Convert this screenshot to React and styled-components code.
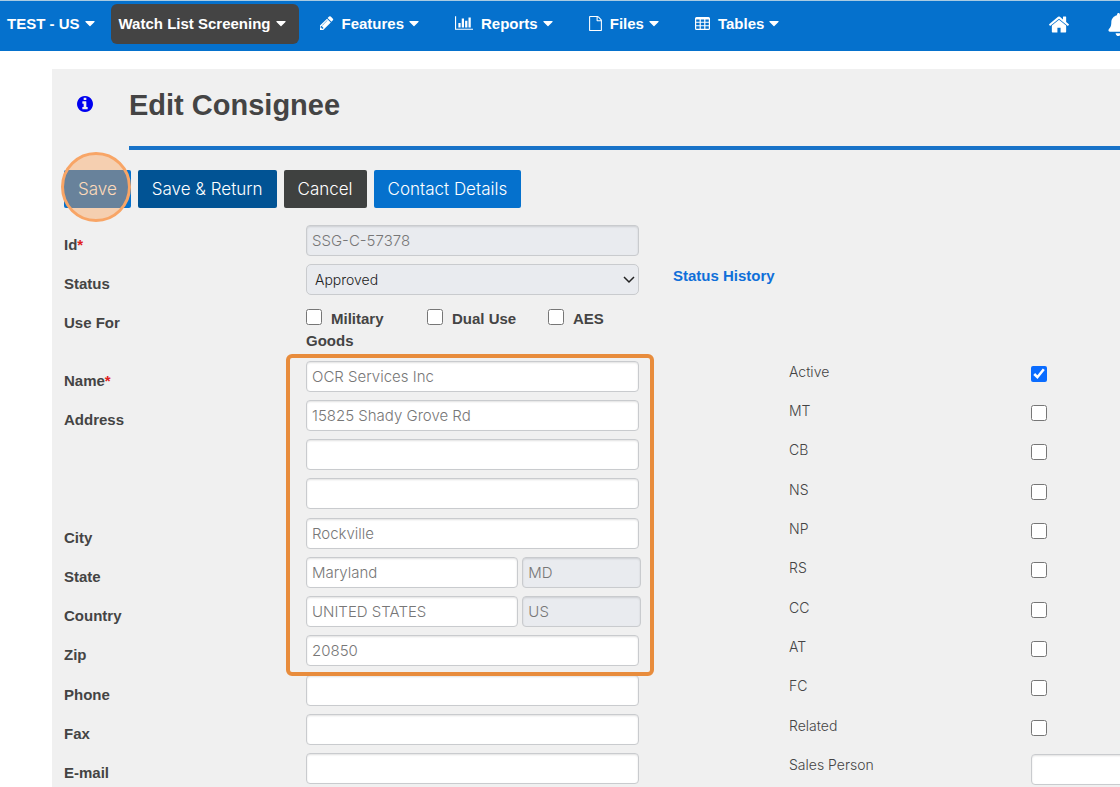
import React from 'react'
import styled, { createGlobalStyle, css } from 'styled-components'
import { FaBell, FaCaretDown } from 'react-icons/fa'

const colors = {
  blue: '#0571cd',
  darkBlue: '#015394',
  dark: '#3f4140',
  text: '#444',
  panel: '#f0f0f0',
  readOnly: '#e9ebef',
  border: '#c9cbce',
  highlight: '#e88c3c',
}

const GlobalStyle = createGlobalStyle`
  * {
    box-sizing: border-box;
  }

  body {
    margin: 0;
    background: #fff;
    color: ${colors.text};
    font-family: 'Liberation Sans', Arial, sans-serif;
    font-size: 15px;
  }
`

const lightText = css`
  font-family: Inter, 'Liberation Sans', sans-serif;
  font-weight: 300;
`

const Page = styled.div`
  display: flex;
  flex-direction: column;
  min-height: 100vh;
  overflow: hidden;
`

/* navigation */

const NavBar = styled.nav`
  display: flex;
  align-items: center;
  justify-content: space-between;
  padding: 3px 0 7px;
  border-top: 1px solid #a9cbe2;
  background: ${colors.blue};
`

const NavGroup = styled.div`
  display: flex;
  align-items: center;
`

const NavItem = styled.button`
  display: flex;
  align-items: center;
  gap: 8px;
  height: 40px;
  padding: 0 18px 2px;
  border: 0;
  border-radius: 6px;
  background: none;
  color: #fff;
  font: bold 15px 'Liberation Sans', Arial, sans-serif;
  white-space: nowrap;
`

const AccountItem = styled(NavItem)`
  padding: 0 16px 2px 7px;
`

const ActiveItem = styled(NavItem)`
  margin-right: 3px;
  padding: 0 13px 2px 8px;
  background: #444;
`

const Caret = styled(FaCaretDown)`
  width: 10px;
  height: 16px;
  margin-left: -3px;
`

const NavActions = styled.div`
  display: flex;
  align-items: center;
  gap: 38px;
  margin-right: -10px;
`

const IconLink = styled.a`
  display: flex;
  color: #fff;
`

/* panel */

const Panel = styled.main`
  flex: 1;
  margin: 18px 0 0 52px;
  padding: 0 0 3px 12px;
  background: ${colors.panel};
`

const Header = styled.header`
  display: flex;
`

const HelpLink = styled.a`
  flex: none;
  width: 65px;
  padding: 27px 0 0 13px;
  color: #0000f0;
`

const Title = styled.h1`
  flex: 1;
  margin: 0;
  padding: 18px 0 23px;
  border-bottom: 4px solid #1873c8;
  font-size: 29px;
  line-height: 36px;
`

const Toolbar = styled.div`
  display: flex;
  gap: 7px;
  margin: 20px 0 17px;
`

const SaveSpot = styled.div`
  position: relative;
`

const Button = styled.button`
  ${lightText}
  height: 38px;
  padding: 0 14px;
  border: 0;
  border-radius: 2px;
  background: ${props => props.$bg};
  color: #fff;
  font-size: 17px;
  white-space: nowrap;
`

const ClickMarker = styled.span`
  position: absolute;
  top: -18px;
  left: -3px;
  width: 70px;
  height: 70px;
  border: 3px solid #f8a566;
  border-radius: 50%;
  background: rgba(252, 157, 80, 0.4);
  pointer-events: none;
`

/* form */

const Columns = styled.div`
  display: grid;
  grid-template-columns: minmax(0, 725fr) minmax(0, 331fr);
`

const Group = styled.div`
  margin-bottom: 1px;
`

const Row = styled.div`
  display: grid;
  grid-template-columns: minmax(0, 242fr) minmax(0, 333fr) minmax(0, 150fr);
  align-items: start;
  min-height: 39px;
`

const Label = styled.label`
  padding-top: 11px;
  font-weight: bold;
  line-height: 18px;
`

const Required = styled.span`
  color: #e02020;
`

const Input = styled.input`
  ${lightText}
  width: 100%;
  min-width: 0;
  height: 31px;
  padding: 0 5px;
  border: 1px solid ${colors.border};
  border-radius: 4px;
  outline: 0;
  background: ${props => (props.readOnly ? colors.readOnly : '#fff')};
  box-shadow: inset 0 1px 2px rgba(0, 0, 0, 0.12);
  color: #777;
  font-size: 15px;
`

const SplitField = styled.div`
  display: grid;
  grid-template-columns: 213fr 119fr;
  gap: 4px;
  margin-right: -2px;
`

const SelectWrap = styled.div`
  position: relative;
`

const Select = styled.select`
  ${lightText}
  width: 100%;
  height: 31px;
  padding: 0 8px;
  border: 1px solid ${colors.border};
  border-radius: 5px;
  appearance: none;
  background: ${colors.readOnly};
  color: #222;
  font-size: 14px;
`

const Chevron = styled.svg`
  position: absolute;
  top: 12px;
  right: 4px;
  pointer-events: none;
`

const HistoryLink = styled.a`
  padding: 3px 0 0 34px;
  color: #0f6fd9;
  font-weight: bold;
  line-height: 18px;
  text-decoration: none;
  white-space: nowrap;
`

const UseFor = styled.div`
  display: grid;
  grid-template-columns: 121fr 121fr 91fr;
  height: 57px;
  padding-top: 5px;
`

const UseOption = styled.label`
  font-weight: bold;
  line-height: 22px;
`

const Checkbox = styled.input.attrs({ type: 'checkbox' })`
  width: 16px;
  height: 16px;
  margin: 0;
  accent-color: #0a6cff;
`

const UseCheckbox = styled(Checkbox)`
  margin-right: 9px;
  vertical-align: -1px;
`

const AddressBlock = styled.div`
  position: relative;
`

const Highlight = styled.div`
  position: absolute;
  top: -7px;
  bottom: -2px;
  left: calc(100% * 242 / 725 - 20px);
  width: calc(100% * 333 / 725 + 35px);
  border: 4px solid ${colors.highlight};
  border-radius: 6px;
  pointer-events: none;
`

const FlagRow = styled.div`
  display: grid;
  grid-template-columns: minmax(0, 242fr) minmax(0, 89fr);
  align-items: start;
  height: 39px;
`

const FlagLabel = styled.label`
  ${lightText}
  padding-top: 2px;
  line-height: 18px;
  font-size: 14px;
`

const FlagCheckbox = styled(Checkbox)`
  margin-top: 5px;
`

const WideInput = styled(Input)`
  width: 332px;
`

const InfoIcon = () => (
  <svg width="16" height="16" viewBox="128 128 1536 1536" fill="currentColor">
    <path d="M1152 1376v-160q0-14-9-23t-23-9h-96v-512q0-14-9-23t-23-9h-320q-14 0-23 9t-9 23v160q0 14 9 23t23 9h96v320h-96q-14 0-23 9t-9 23v160q0 14 9 23t23 9h448q14 0 23-9t9-23zm-128-896v-160q0-14-9-23t-23-9h-192q-14 0-23 9t-9 23v160q0 14 9 23t23 9h192q14 0 23-9t9-23zm640 416q0 209-103 385.5t-279.5 279.5-385.5 103-385.5-103-279.5-279.5-103-385.5 103-385.5 279.5-279.5 385.5-103 385.5 103 279.5 279.5 103 385.5z" />
  </svg>
)

const PencilIcon = () => (
  <svg width="14" height="14" viewBox="192 128 1536 1536" fill="currentColor">
    <path d="M491 1536l91-91-235-235-91 91v107h128v128h107zm523-928q0-22-22-22-10 0-17 7l-542 542q-7 7-7 17 0 22 22 22 10 0 17-7l542-542q7-7 7-17zm-54-192l416 416-832 832h-416v-416zm683 96q0 53-37 90l-166 166-416-416 166-165q36-38 90-38 53 0 91 38l235 234q37 39 37 91z" />
  </svg>
)

const ChartIcon = () => (
  <svg width="18" height="16" viewBox="0 0 2048 1792" fill="currentColor">
    <path d="M640 896v512h-256v-512h256zm384-512v1024h-256v-1024h256zm1024 1152v128h-2048v-1536h128v1408h1920zm-640-896v768h-256v-768h256zm384-384v1152h-256v-1152h256z" />
  </svg>
)

const FileIcon = () => (
  <svg width="13" height="15" viewBox="128 0 1536 1792" fill="currentColor">
    <path d="M1596 380q28 28 48 76t20 88v1152q0 40-28 68t-68 28h-1344q-40 0-68-28t-28-68v-1600q0-40 28-68t68-28h896q40 0 88 20t76 48zm-444-244v376h376q-10-29-22-41l-313-313q-12-12-41-22zm384 1528v-1024h-416q-40 0-68-28t-28-68v-416h-768v1536h1280z" />
  </svg>
)

const TableIcon = () => (
  <svg width="15" height="13" viewBox="0 0 15 13" fill="currentColor" fillRule="evenodd">
    <path d="M1.5 0h12A1.5 1.5 0 0 1 15 1.5v10a1.5 1.5 0 0 1-1.5 1.5h-12A1.5 1.5 0 0 1 0 11.5v-10A1.5 1.5 0 0 1 1.5 0zM1.2 2.4v2.400h3.4v-2.400zm4.6 0v2.400h3.4v-2.400zm4.6 0v2.400h3.4v-2.400zM1.2 5.8v2.400h3.4v-2.400zm4.6 0v2.400h3.4v-2.400zm4.6 0v2.400h3.4v-2.400zM1.2 9.2v2.600h3.4v-2.600zm4.6 0v2.600h3.4v-2.600zm4.6 0v2.600h3.4v-2.600z" />
  </svg>
)

const HomeIcon = () => (
  <svg width="20" height="17" viewBox="90 240 1612 1312" fill="currentColor">
    <path d="M1472 992v480q0 26-19 45t-45 19h-384v-384h-256v384h-384q-26 0-45-19t-19-45v-480q0-1 .5-3t.5-3l575-474 575 474q1 2 1 6zm223-69l-62 74q-8 9-21 11h-3q-13 0-21-7l-692-577-692 577q-12 8-24 7-13-2-21-11l-62-74q-8-10-7-23.5t11-21.5l719-599q32-26 76-26t76 26l244 204v-195q0-14 9-23t23-9h192q14 0 23 9t9 23v408l219 182q10 8 11 21.5t-7 23.5z" />
  </svg>
)

const menus = [
  { title: 'Features', Icon: PencilIcon },
  { title: 'Reports', Icon: ChartIcon },
  { title: 'Files', Icon: FileIcon },
  { title: 'Tables', Icon: TableIcon },
]

const nameFields = [
  { id: 'name', label: 'Name', value: 'OCR Services Inc', required: true },
  { id: 'address1', label: 'Address', value: '15825 Shady Grove Rd' },
  { id: 'address2', ariaLabel: 'Address line 2', value: '' },
  { id: 'address3', ariaLabel: 'Address line 3', value: '' },
]

const placeFields = [
  { id: 'city', label: 'City', value: 'Rockville' },
  { id: 'state', label: 'State', value: 'Maryland', code: 'MD' },
  { id: 'country', label: 'Country', value: 'UNITED STATES', code: 'US' },
  { id: 'zip', label: 'Zip', value: '20850' },
]

const contactFields = [
  { id: 'phone', label: 'Phone', value: '' },
  { id: 'fax', label: 'Fax', value: '' },
  { id: 'email', label: 'E-mail', value: '' },
]

const flagGroups = [
  ['Active', 'MT', 'CB'],
  ['NS', 'NP', 'RS'],
  ['CC', 'AT', 'FC'],
]

const Field = ({ id, label, ariaLabel, value, code, required, readOnly }) => (
  <Row>
    {label ? (
      <Label htmlFor={id}>
        {label}
        {required && <Required>*</Required>}
      </Label>
    ) : (
      <span />
    )}
    {code ? (
      <SplitField>
        <Input id={id} defaultValue={value} />
        <Input aria-label={`${label} code`} defaultValue={code} readOnly />
      </SplitField>
    ) : (
      <Input
        id={id}
        aria-label={ariaLabel}
        defaultValue={value}
        readOnly={readOnly}
      />
    )}
  </Row>
)

const Flag = ({ name }) => (
  <FlagRow>
    <FlagLabel htmlFor={`flag-${name}`}>{name}</FlagLabel>
    <FlagCheckbox id={`flag-${name}`} defaultChecked={name === 'Active'} />
  </FlagRow>
)

const App = () => (
  <Page>
    <GlobalStyle />
    <NavBar>
      <NavGroup>
        <AccountItem>
          TEST - US <Caret />
        </AccountItem>
        <ActiveItem>
          Watch List Screening <Caret />
        </ActiveItem>
        {menus.map(({ title, Icon }) => (
          <NavItem key={title}>
            <Icon />
            {title}
            <Caret />
          </NavItem>
        ))}
      </NavGroup>
      <NavActions>
        <IconLink href="#home" aria-label="Home">
          <HomeIcon />
        </IconLink>
        <IconLink href="#alerts" aria-label="Alerts">
          <FaBell size={23} />
        </IconLink>
      </NavActions>
    </NavBar>

    <Panel>
      <Header>
        <HelpLink href="#help" aria-label="Help">
          <InfoIcon />
        </HelpLink>
        <Title>Edit Consignee</Title>
      </Header>

      <Toolbar>
        <SaveSpot>
          <Button $bg={colors.blue}>Save</Button>
          <ClickMarker />
        </SaveSpot>
        <Button $bg={colors.darkBlue}>Save &amp; Return</Button>
        <Button $bg={colors.dark}>Cancel</Button>
        <Button $bg={colors.blue}>Contact Details</Button>
      </Toolbar>

      <Columns>
        <Group>
          <Field id="consignee-id" label="Id" value="SSG-C-57378" required readOnly />
          <Row>
            <Label htmlFor="status">Status</Label>
            <SelectWrap>
              <Select id="status" defaultValue="Approved">
                <option>Approved</option>
              </Select>
              <Chevron width="12" height="8" viewBox="0 0 12 8">
                <path d="M1 1l5 5 5-5" fill="none" stroke="#222" strokeWidth="1.5" />
              </Chevron>
            </SelectWrap>
            <HistoryLink href="#history">Status History</HistoryLink>
          </Row>
          <Row>
            <Label as="span" id="use-for">Use For</Label>
            <UseFor role="group" aria-labelledby="use-for">
              {['Military Goods', 'Dual Use', 'AES'].map(use => (
                <UseOption key={use}>
                  <UseCheckbox />
                  {use}
                </UseOption>
              ))}
            </UseFor>
          </Row>
        </Group>
      </Columns>

      <Columns>
        <div>
          <AddressBlock>
            <Group>
              {nameFields.map(field => (
                <Field key={field.id} {...field} />
              ))}
            </Group>
            <Group>
              {placeFields.map(field => (
                <Field key={field.id} {...field} />
              ))}
            </Group>
            <Highlight />
          </AddressBlock>
          <Group>
            {contactFields.map(field => (
              <Field key={field.id} {...field} />
            ))}
          </Group>
        </div>

        <div>
          {flagGroups.map(group => (
            <Group key={group[0]}>
              {group.map(name => (
                <Flag key={name} name={name} />
              ))}
            </Group>
          ))}
          <Flag name="Related" />
          <FlagRow>
            <FlagLabel htmlFor="sales-person">Sales Person</FlagLabel>
            <WideInput id="sales-person" />
          </FlagRow>
        </div>
      </Columns>
    </Panel>
  </Page>
)

export default App
